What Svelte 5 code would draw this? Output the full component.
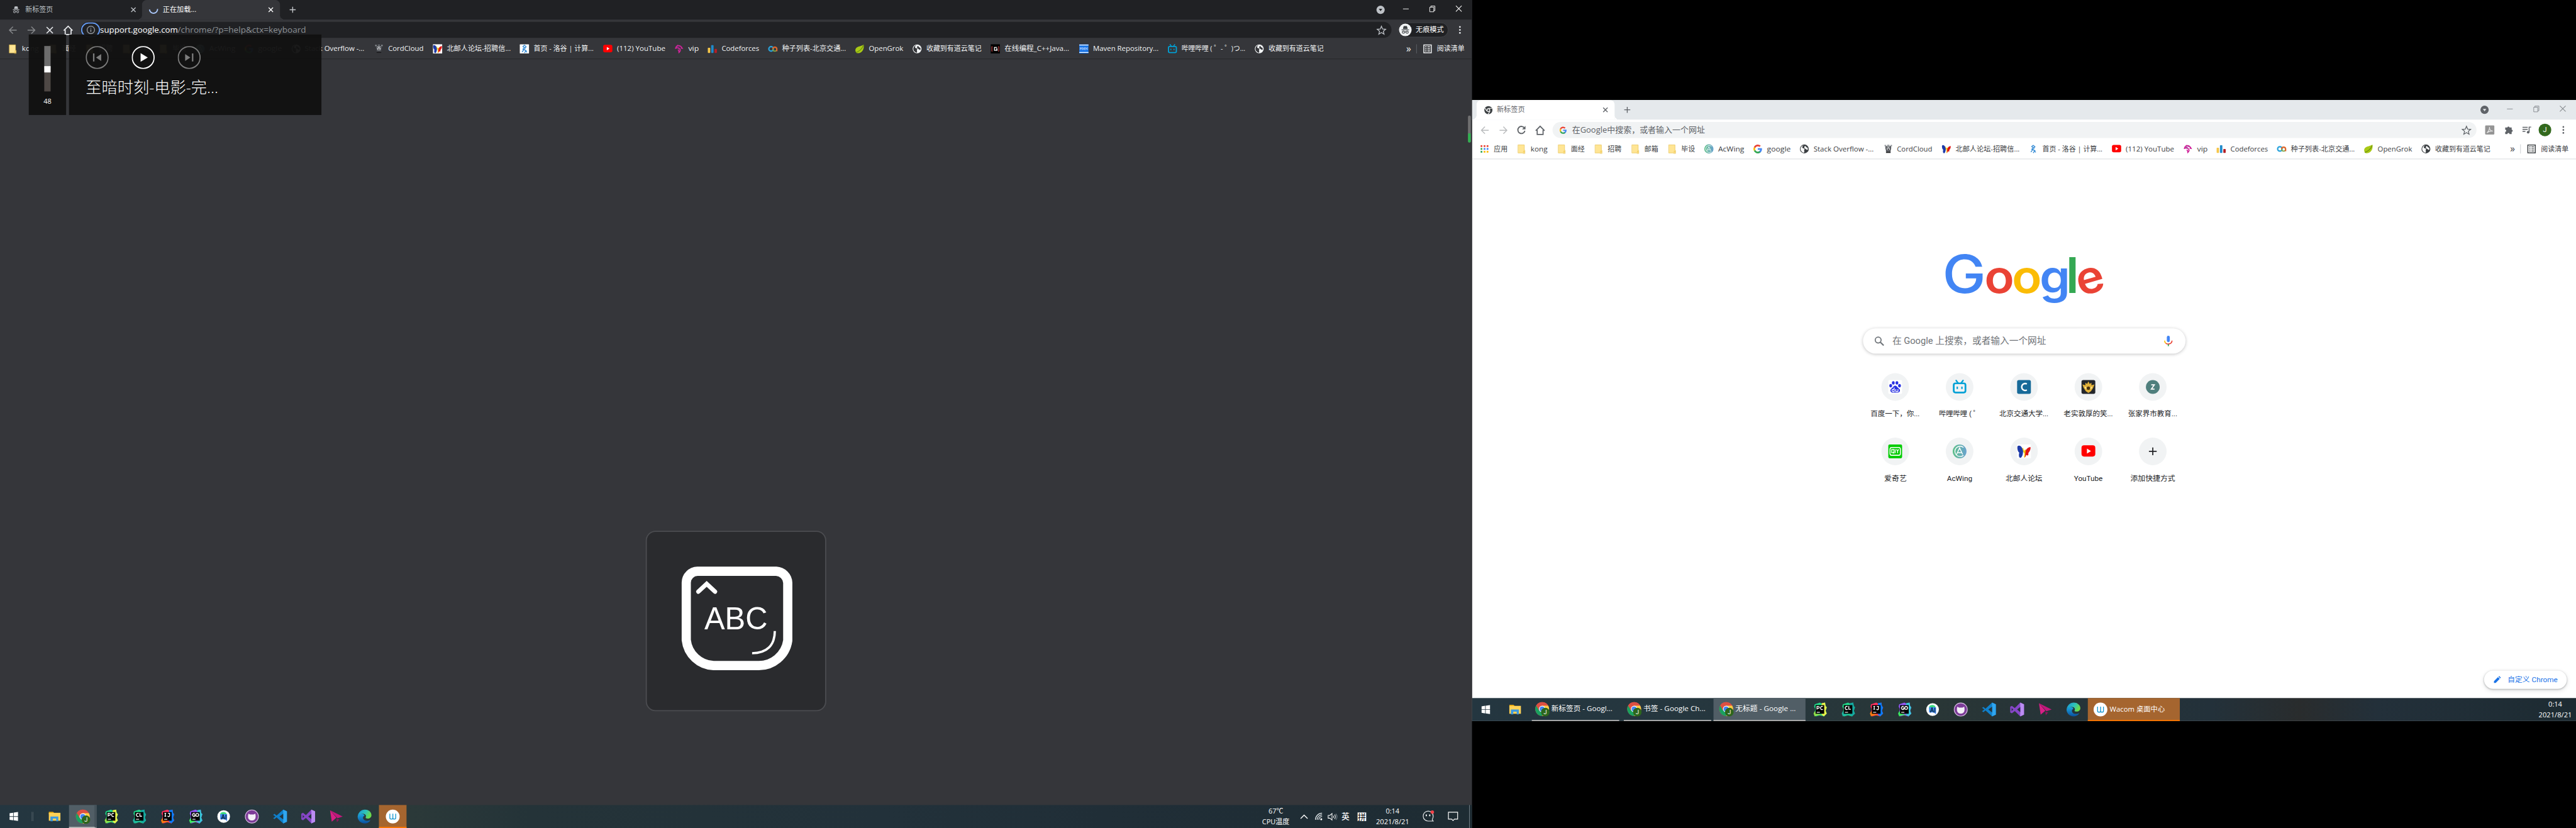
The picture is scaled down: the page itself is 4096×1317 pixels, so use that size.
<script>
  // Stretches a text run to a known advance width.
  function fit(node, w) {
    const s = node.firstElementChild;
    const apply = () => {
      s.style.transform = `scaleX(${w / s.offsetWidth})`;
    };
    apply();
    document.fonts.ready.then(apply);
  }

  const folder = '<rect x=".5" y="1" width="10.5" height="14" fill="#ffe594"/><path d="M0 1h11v9.500h1V16h-3v-1H0z" fill="none" stroke="#e8c14f" stroke-width=".8"/><path d="M9 11h3v4H9z" fill="#f6d36b"/>';
  const globe = '<circle cx="8" cy="8" r="7.700" fill="currentColor"/><path d="M7 1.500c-2 1-3.500 3-2 5l3 1c1 1-.5 1.500-.5 2.500s1 3 0 4.500c-3.500-.5-6-3.500-6-6.500S4 2 7 1.500zM9 3c2 0 1.500 2 3 2.500s2 1 2 3-2 1-3 0-3-1-3-2.500S8 4 9 3z" fill="var(--bg)"/>';
  const butterfly = '<rect width="16" height="16" fill="#fff"/><path d="M.5 2C3 0 6 3 7 7c0 4-1 8-3 8.500C1.500 15.500 2 11 2.500 9.500.5 8 0 4 .5 2z" fill="#1d3aa8"/><path d="M15.500 3C13 3 9.500 6 8.500 10v5c1 0 1.500-1 2-3 2 2 3 0 2.500-2C15 8 16 5 15.500 3z" fill="#e01515"/><path d="M6.500 4l1.500 5 1.500-3-1 9" fill="none" stroke="#f4c900" stroke-width="1"/>';
  const bili = '<path d="M4 .5l2.300 3M12 .5l-2.300 3" stroke="#00a1d6" stroke-width="1.700" stroke-linecap="round"/><rect x="1.200" y="3.800" width="13.600" height="10.600" rx="2" fill="none" stroke="#00a1d6" stroke-width="2"/><path d="M5.300 7.700v2.600M10.700 7.700v2.600" stroke="#00a1d6" stroke-width="1.600"/>';
  const google = '<path d="M8 6.700v2.900h4.200c-.4 1.900-2 3.100-4.200 3.100v3c4.300-.1 7.300-3 7.300-7.500 0-.5 0-1-.1-1.500z" fill="#4285f4"/><path d="M1.200 11.400C2.500 14 5 15.700 8 15.700c1.900 0 3.600-.7 4.900-1.800l-2.400-1.900c-.7.5-1.500.7-2.500.7-2 0-3.700-1.200-4.300-3.100z" fill="#34a853"/><path d="M3.700 9.600a4.800 4.800 0 0 1 0-3.100L1.200 4.500a7.800 7.800 0 0 0 0 7z" fill="#fbbc05"/><path d="M8 3.400c1.200 0 2.200.4 3 1.200L13.200 2.400A7.700 7.700 0 0 0 1.200 4.500l2.500 2C4.300 4.600 6 3.400 8 3.400z" fill="#ea4335"/>';
  const youtube = '<rect y="1" width="16" height="13" rx="3" fill="#f00"/><path d="M6.300 4.700v5.800L11 7.600z" fill="#fff"/>';
  const acwing = '<defs><linearGradient id="acg"><stop stop-color="#5fc08a"/><stop offset="1" stop-color="#6aa2cf"/></linearGradient></defs><circle cx="8" cy="8" r="8" fill="url(#acg)"/><path d="M12.500 3.500a6 6 0 1 0 0 9M4.500 11.500L8 4l3.500 7.500M6 9.500h4" fill="none" stroke="#fff" stroke-width="1"/>';

  const icons = {
    folder, globe, butterfly, bili, google, youtube, acwing,
    apps: '<path d="M1 1.500h3v3H1zM6.300 1.500h3v3h-3zM11.500 1.500h3v3h-3z" fill="#ea4335"/><path d="M1 6.500h3v3H1z" fill="#34a853"/><path d="M6.300 6.500h3v3h-3zM11.500 6.500h3v3h-3z" fill="#4285f4"/><path d="M1 11.500h3v3H1z" fill="#34a853"/><path d="M6.300 11.500h3v3h-3zM11.500 11.500h3v3h-3z" fill="#fbbc05"/>',
    cord: '<path d="M3 3h10v4l-1 4v2H4v-2L3 7z" fill="#4a4d52"/><path d="M5 4h6v3.500l-1 3H6l-1-3z" fill="#c9ccd0"/><path d="M5.500 5h1.500v1.500H5.500zM9 5h1.500v1.500H9zM7 7.500h2V10H7z" fill="#1c1d1f"/><path d="M4 13h8v2H4z" fill="#1c1d1f"/><path d="M1.500 1H4v2.500H1.500zM12 1h2.500v2.500H12zM6 .8h4v1.500H6z" fill="#8f9499"/>',
    luogu: '<rect width="16" height="16" rx="1" fill="var(--tile)"/><path d="M8 1.500l3 3-3 2-2.500 2L11 11l-3 4M8 1.500L5.500 4 10 7.500M8 8l-4 5.500M9 10l3.500 4" fill="none" stroke="#3b8fd6" stroke-width="1.600"/>',
    vip: '<path d="M2 8c0-3 2-5 4.500-6.500M6 2.500c3-.5 6 1.500 7.500 4.500l-2.500-.5M3 6.500c2-.5 4.500 0 6 1.500s1.500 4-1 6c0-2-.5-3.500-2-4.500" fill="none" stroke="#d0259a" stroke-width="2"/><path d="M6 2.500L5 7l5-4" stroke="#8d2a8d" stroke-width=".9" fill="none"/>',
    cf: '<rect x="0" y="6" width="4.200" height="9" rx="1" fill="#f5c64a"/><rect x="5.800" y="1.500" width="4.200" height="13.500" rx="1" fill="#1f8acb"/><rect x="11.600" y="8" width="4.200" height="7" rx="1" fill="#b51f26"/>',
    seed: '<circle cx="5" cy="8" r="3.900" fill="none" stroke="#2aa3dc" stroke-width="2.400"/><circle cx="11.500" cy="8.500" r="3.400" fill="none" stroke="#7fa54b" stroke-width="2"/><path d="M8 8a3.600 3.600 0 0 1 7-.5V12" fill="none" stroke="#e9632b" stroke-width="2.200"/>',
    leaf: '<path d="M15 .5C10 4 2 3 .7 9c-.5 3 1 6 3.500 6.500C12 15.500 16.500 9 15 .5z" fill="#a9c916"/><path d="M1.500 14C6 13 12 9 14.500 2" fill="none" stroke="#668b10" stroke-width="1.200"/>',
    cg: '<rect width="16" height="16" fill="#000"/><path d="M3 4H2v8h1M13 4h1v8h-1" stroke="#f55" stroke-width="1" fill="none"/><path d="M11 5.500H6.500v5H11V8H9" fill="none" stroke="#fff" stroke-width="1.400"/>',
    mvn: '<rect width="16" height="16" fill="#1673e6"/><path d="M0 1.200h16M0 14.200h16" stroke="#fff" stroke-width="1.400"/><path d="M1.500 10V5.500l1.500 2 1.500-2V10M6.500 5v5M9 5v5M6.500 8H9M11 10V5.500l3 4V5" fill="none" stroke="#bcd8ff" stroke-width="1"/>',
    list: '<rect x="1.200" y="1.200" width="13" height="13.600" fill="none" stroke="currentColor" stroke-width="1.600"/><path d="M3.500 4.500H6M7.500 4.500H12M3.500 8H6M7.500 8H12M3.500 11.500H6M7.500 11.500H12" stroke="currentColor" stroke-width="1.500"/>',
    incog: '<path d="M5 2l1-1 2 .5 2-.5 1 1 1.200 4.500H3.800z" fill="currentColor"/><path d="M1.500 8h13M7 11.800c.5-.5 1.500-.5 2 0" stroke="currentColor" stroke-width="1.200" fill="none"/><circle cx="4.800" cy="12" r="2" fill="none" stroke="currentColor" stroke-width="1.200"/><circle cx="11.200" cy="12" r="2" fill="none" stroke="currentColor" stroke-width="1.200"/>',
    spin: '<path d="M1 7.500A7 7 0 0 0 15 6.500" fill="none" stroke="#a9c7fa" stroke-width="2"/>',
    mono: '<circle cx="8" cy="8" r="7.500" fill="#3c4043"/><circle cx="8" cy="8" r="2.600" fill="#3c4043" stroke="#fff" stroke-width="1.300"/><path d="M8 4.500h6.800M4.800 9.500L1.500 4M11 10l-3.500 5.500" stroke="#fff" stroke-width="1.200"/>',
    x: '<path d="M4.200 4.200l7.600 7.600M11.800 4.200l-7.600 7.600" stroke="currentColor" stroke-width="1.500"/>',
    plus: '<path d="M8 2v12M2 8h12" stroke="currentColor" stroke-width="1.700"/>',
    back: '<path d="M15 8H2M8 1.500L1.500 8 8 14.500" fill="none" stroke="currentColor" stroke-width="1.700"/>',
    fwd: '<path d="M1 8h13M8 1.500L14.500 8 8 14.500" fill="none" stroke="currentColor" stroke-width="1.700"/>',
    stop: '<path d="M2.200 2.200l11.600 11.600M13.800 2.200L2.200 13.800" stroke="currentColor" stroke-width="1.900"/>',
    reload: '<path d="M13.300 4.800A6.200 6.200 0 1 0 14 9.500" fill="none" stroke="currentColor" stroke-width="2"/><path d="M15 1v6H9z" fill="currentColor"/>',
    home: '<path d="M.8 8.700L8 1.500l7.200 7.200M3.200 7.500V15H12.800V7.500" fill="none" stroke="currentColor" stroke-width="1.800"/>',
    info: '<circle cx="8" cy="8" r="6.500" fill="none" stroke="currentColor" stroke-width="1.400"/><path d="M8 7v4.500M8 4.300v1.500" stroke="currentColor" stroke-width="1.500"/>',
    star: '<path d="M8 1.500l1.900 4.600 5 .4-3.800 3.200 1.200 4.800L8 11.900l-4.300 2.600 1.200-4.800L1.100 6.500l5-.4z" fill="none" stroke="currentColor" stroke-width="1.300"/>',
    dots: '<circle cx="8" cy="2.800" r="1.500" fill="currentColor"/><circle cx="8" cy="8" r="1.500" fill="currentColor"/><circle cx="8" cy="13.200" r="1.500" fill="currentColor"/>',
    drop: '<circle cx="8" cy="8" r="7.200" fill="currentColor"/><path d="M5 6.300h6L8 10.500z" fill="var(--strip)"/>',
    min: '<path d="M3 8.500h10" stroke="currentColor" stroke-width="1"/>',
    restore: '<path d="M3.500 5.500h7v8h-7zM5.500 5.500v-2h7v8h-2" fill="none" stroke="currentColor" stroke-width="1"/>',
    close: '<path d="M3 3l10 10M13 3L3 13" stroke="currentColor" stroke-width="1.100"/>',
    pdf: '<rect width="16" height="16" rx="1.500" fill="#959595"/><path d="M3 13c3-3 5-6 4.500-10 0 5 3 7 6 7-4-.5-8 1-10.500 3z" fill="none" stroke="#e8e8e8" stroke-width="1.200"/>',
    puzzle: '<path d="M6 3a2 2 0 0 1 4 0h4v4a2 2 0 0 1 0 4v4h-4a2 2 0 0 0-4 0H2v-4a2 2 0 0 0 0-4V3z" fill="currentColor"/>',
    music: '<path d="M1 3.500h9M1 7h9M1 10.500h5M12.500 12V3H16" stroke="currentColor" stroke-width="1.600" fill="none"/><circle cx="10.800" cy="12" r="2.300" fill="currentColor"/>',
    search: '<circle cx="6" cy="6" r="4.800" fill="none" stroke="#70757a" stroke-width="1.800"/><path d="M9.500 9.500L15 15" stroke="#70757a" stroke-width="2.200"/>',
    mic: '<rect x="5.700" y="0" width="4.600" height="9.800" rx="2.300" fill="#4285f4"/><path d="M2.300 7.500c0 2 .8 3.300 2 4.200" stroke="#fbbc05" stroke-width="1.600" fill="none"/><path d="M4.200 11.600c2.500 2 9.500 1.500 9.500-4.100" stroke="#ea4335" stroke-width="1.600" fill="none"/><path d="M8 13v3" stroke="#34a853" stroke-width="1.700"/>',
    pencil: '<path d="M1.500 14.500V11L9.500 3 13 6.500l-8 8zM10.500 2l1.500-1.200L15.200 4 14 5.500z" fill="#1a73e8"/>',
    baidu: '<rect width="16" height="16" rx="1.500" fill="#fff"/><g fill="#2932e1"><ellipse cx="2.800" cy="6.500" rx="1.600" ry="2"/><ellipse cx="5.800" cy="3.300" rx="1.600" ry="2"/><ellipse cx="10" cy="3.300" rx="1.600" ry="2"/><ellipse cx="13" cy="6.500" rx="1.600" ry="2"/><path d="M8 6.500c-2 0-2.500 2-4.500 3.500s-1 4.500 1.500 4.500h6c2.500 0 3.500-3 1.500-4.500S10 6.500 8 6.500z"/></g><path d="M6.800 8.800v4.500H5.500a1 1 0 0 1 0-2.500h1.300M8.700 10.500v2.800h2.500v-2.800" fill="none" stroke="#fff" stroke-width=".9"/>',
    csdn: '<rect width="16" height="16" rx="2" fill="#176a99"/><path d="M11.300 4.500a4 4 0 1 0 0 7" fill="none" stroke="#fff" stroke-width="1.700"/>',
    crown: '<rect width="16" height="16" rx="2" fill="#23262b"/><path d="M8 1.500l1.500 3 2-1.500v3L15 5l-1.500 4L11 13l-3 2-3-2-2.500-4L1 5l3.500 1V3l2 1.500z" fill="#e2b23a"/><circle cx="8" cy="9.500" r="2" fill="#4a3413"/><path d="M4 8l1.500 2M12 8l-1.500 2" stroke="#fff3b0" stroke-width="1"/>',
    zed: '<circle cx="8" cy="8" r="8" fill="#4f7f7d"/><path d="M6.200 5.500h3.600L6.300 10.500h3.700" fill="none" stroke="#fff" stroke-width="1.200"/>',
    iqiyi: '<rect width="16" height="16" rx="1.500" fill="#0c0"/><rect x="2" y="3.500" width="12" height="9" rx="2" fill="none" stroke="#fff" stroke-width="1.100"/><path d="M4 5.800h2.500v3.800H4zM5.500 9l1.200 1.500M8 5.500v4.500M9.500 5.500l1.300 2 1.300-2M10.800 7.500V10" fill="none" stroke="#fff" stroke-width="1"/>'
  };

  const jb = (a, b, c, body) =>
    `<path d="M3 3l9-3 4 2 5-2 1 6 2 2-2 6 2 5-5 5-7-2-7 2-2-7 1-6-2-4z" fill="${a}"/><path d="M15 1l6-1 1 6 2 2-2 6 2 5-5 5-4-3z" fill="${b}"/><path d="M3 15l5 4 8 3-8 0-5 2-2-5z" fill="${c}"/><rect x="4.500" y="4.300" width="15" height="15" fill="#000"/><path d="M6.500 16.800h5.500" stroke="#fff" stroke-width="1.300"/><g fill="none" stroke="#fff" stroke-width="1.500">${body}</g>`;
  const apps = {
    start: '<path d="M4 5.800l6.800-1v6.700H4zM11.800 4.700L20 3.500v8h-8.200zM4 12.500h6.800v6.700L4 18.200zM11.800 12.500H20v8l-8.200-1.200z" fill="#fff"/>',
    files: '<path d="M1 3h8l2 2v3H1z" fill="#e5a50a"/><path d="M1 5h22v15H1z" fill="#ffd257"/><path d="M4 21v-9h15v9h-4v-5H8.500v5z" fill="#3c9ae0"/>',
    chrome: '<circle cx="12" cy="12" r="12" fill="#dd4f43"/><path d="M1.600 6A12 12 0 0 0 12 24l5-9z" fill="#1aa15f"/><path d="M12 24A12 12 0 0 0 22.400 6H12l5 9z" fill="#ffce44"/><path d="M1.600 6l5 8.800L12 6h10.400A12 12 0 0 0 1.600 6z" fill="#dd4f43"/><circle cx="12" cy="12" r="5.600" fill="#fff"/><circle cx="12" cy="12" r="4.400" fill="#4285f4"/>',
    pc: jb('#21d789', '#e9f24a', '#8fe04a', '<path d="M7 12V6.500h2.300a1.500 1.500 0 0 1 0 3.300H7M17.200 7a2.700 2.700 0 1 0 0 4.500"/>'),
    cl: jb('#21d789', '#15a9a1', '#1fb7a0', '<path d="M11.200 7a2.700 2.700 0 1 0 0 4.500M13.300 6v5.500H17"/>'),
    ij: jb('#fe315d', '#087cfa', '#f97a12', '<path d="M7 6.500h3M7 11.500h3M8.500 6.500v5M13 6.500h3v3.800a1.600 1.600 0 0 1-3.300.6"/>'),
    go: jb('#9357f5', '#38c8d8', '#3bea62', '<path d="M11 7a2.700 2.700 0 1 0 0 4.500V9.300H9"/><circle cx="15" cy="9.200" r="2.500"/>'),
    as: '<circle cx="12" cy="12" r="11" fill="#fff"/><path d="M6 7a6 5 0 0 1 11 0v8H6z" fill="#3ddc84"/><path d="M6 8h12v12l-4-3H6z" fill="#4285f4"/><path d="M8 17l3-8 3 8M9 14.500h4M16 9v8" fill="none" stroke="#073042" stroke-width="1.500"/>',
    gh: '<circle cx="12" cy="12" r="11.400" fill="#7d3c98" stroke="#d7bde2" stroke-width="1.200"/><path d="M6 7l3 1.500h6L18 7c1 4 1 8-1 10s-3 2-5 2-3 0-5-2-2-6-1-10z" fill="#f4f0f7"/>',
    code: '<path d="M17.500 0L24 3v18l-6.500 3L6 13.500 2.500 16.500 0 15l4-3-4-3 2.500-1.500L6 10.500z" fill="#0f80cc"/><path d="M17.500 0L24 3v18l-6.500 3z" fill="#2fa6f0"/><path d="M17.500 7v10L11 12z" fill="#24343c"/>',
    vs: '<path d="M17.500 0L24 3v18l-6.500 3L8 14.500 3 18.500 0 17V7l3-1.500 5 4z" fill="#8646c8"/><path d="M17.500 0L24 3v18l-6.500 3z" fill="#bb8cf2"/><path d="M17.500 7.500v9L12 12zM2.500 9.500v5l2.800-2.500z" fill="#24343c"/>',
    plane: '<path d="M1 1l22 11-9 3z" fill="#c2187c"/><path d="M1 1l3 20 8-7z" fill="#d81f86"/><path d="M12 16l5 1-4 5z" fill="#8f145e"/>',
    edge: '<defs><linearGradient id="eg" x2="1" y2=".4"><stop stop-color="#1693d8"/><stop offset=".6" stop-color="#2fc3b8"/><stop offset="1" stop-color="#6bdc4a"/></linearGradient><linearGradient id="eb" x2="0" y2="1"><stop stop-color="#1ca7e0"/><stop offset="1" stop-color="#0a4f9e"/></linearGradient></defs><path d="M0 12C1 5 6 0 12.500 0 20 0 24 5 24 9.500c0 4-3 6-6.500 6-3 0-4-1-3.500-2 1.500-3-.5-6-4.500-6C5 7.500 1 9 0 12z" fill="url(#eg)"/><path d="M0 12c1-5 11-6.500 12-1-4 0-4.500 9.500 6 8.500 2 0 3.500-1.500 4-1C20 22 16.500 24 12.500 24 5 24 0 18.500 0 12z" fill="url(#eb)"/>',
    wacom: '<circle cx="12" cy="12" r="12" fill="#fff"/><path d="M7 7v7.500q0 2 2.500 2h.5q2.200 0 2.200-2V7M12.200 14.500q0 2 2.200 2h.5q2.300 0 2.300-2V7" fill="none" stroke="#1d9bd1" stroke-width="1.500"/>',
    caret: '<path d="M6 15.500L12 9.500l6 6" fill="none" stroke="#fff" stroke-width="1.500"/>',
    wifi: '<g fill="none" stroke="#dfe5e8" stroke-width="1.400"><path d="M6 17.500A12 12 0 0 1 18 5.500"/><path d="M9 17.500a9 9 0 0 1 9-9"/><path d="M12 17.500a6 6 0 0 1 6-6"/></g><circle cx="16.500" cy="16.500" r="1.800" fill="#fff"/>',
    sound: '<path d="M4 9.500h3L11 6v12l-4-3.500H4z" fill="none" stroke="#fff" stroke-width="1.200"/><path d="M13.500 10a4 4 0 0 1 0 4M15.700 8a7 7 0 0 1 0 8" fill="none" stroke="#fff" stroke-width="1.200"/><path d="M18 6.500a9 9 0 0 1 0 11" fill="none" stroke="#77858c" stroke-width="1.200"/>',
    ghost: '<path d="M20.500 20H12a8.700 8.700 0 1 1 8.500-8.500c0 4-2 5-1.500 6.500z" fill="none" stroke="#e3e6e8" stroke-width="1.300"/><path d="M8.500 8.500v3M14.500 8.500v3" stroke="#fff" stroke-width="2"/><circle cx="19" cy="4.500" r="3" fill="#f4434a"/>',
    note: '<path d="M4 4.500h16v12h-5.500L12 19l-2.500-2.500H4z" fill="none" stroke="#fff" stroke-width="1.300"/>'
  };

  // Each bookmark: icon, icon x, text x, label, label width.
  const darkMarks = [
    ['folder', 16, 38, 'kong', 29], ['folder', 86, 108, '面经', 24], ['folder', 150, 172, '招聘', 24],
    ['folder', 214, 237, '邮箱', 24], ['folder', 278, 300, '毕设', 24], ['acwing', 340, 364, 'AcWing', 45],
    ['google', 425, 449, 'google', 41], ['globe', 507, 530, 'Stack Overflow -...', 104],
    ['cord', 651, 675, 'CordCloud', 62], ['butterfly', 753, 777, '北邮人论坛-招聘信...', 111],
    ['luogu', 904, 928, '首页 - 洛谷 | 计算...', 104], ['youtube', 1049, 1073, '(112) YouTube', 84],
    ['vip', 1173, 1197, 'vip', 18], ['cf', 1231, 1255, 'Codeforces', 65],
    ['seed', 1336, 1360, '种子列表-北京交通...', 111], ['leaf', 1487, 1511, 'OpenGrok', 60],
    ['globe', 1587, 1611, '收藏到有道云笔记', 96], ['cg', 1723, 1747, '在线编程_C++Java...', 113],
    ['mvn', 1877, 1901, 'Maven Repository...', 114], ['bili', 2031, 2055, '哔哩哔哩 ( ゜- ゜)つ...', 111],
    ['globe', 2182, 2206, '收藏到有道云笔记', 96]
  ];
  const lightMarks = [
    ['apps', 14, 38, '应用', 24], ['folder', 80, 102, 'kong', 29], ['folder', 150, 172, '面经', 24],
    ['folder', 214, 236, '招聘', 24], ['folder', 278, 300, '邮箱', 24], ['folder', 342, 364, '毕设', 24],
    ['acwing', 404, 428, 'AcWing', 45], ['google', 489, 513, 'google', 41],
    ['globe', 570, 594, 'Stack Overflow -...', 105], ['cord', 716, 739, 'CordCloud', 62],
    ['butterfly', 817, 841, '北邮人论坛-招聘信...', 111], ['luogu', 968, 992, '首页 - 洛谷 | 计算...', 104],
    ['youtube', 1113, 1137, '(112) YouTube', 84], ['vip', 1237, 1261, 'vip', 18],
    ['cf', 1295, 1319, 'Codeforces', 65], ['seed', 1400, 1424, '种子列表-北京交通...', 111],
    ['leaf', 1551, 1575, 'OpenGrok', 60], ['globe', 1651, 1675, '收藏到有道云笔记', 96]
  ];
  // Letter, colour, glyph advance, distance to the next letter.
  const logo = [
    ['G', '#4285f4', 76, 73], ['o', '#ea4335', 52, 48], ['o', '#fbbc05', 52, 48],
    ['g', '#4285f4', 53, 46], ['l', '#34a853', 23, 16], ['e', '#ea4335', 49, 49]
  ];
  const tiles = [
    ['baidu', '百度一下，你...', 86], ['bili', '哔哩哔哩 ( ゜', 72], ['csdn', '北京交通大学...', 86],
    ['crown', '老实敦厚的笑...', 86], ['zed', '张家界市教育...', 86], ['iqiyi', '爱奇艺', 39],
    ['acwing', 'AcWing', 44], ['butterfly', '北邮人论坛', 64], ['youtube', 'YouTube', 50], ['plus', '添加快捷方式', 78]
  ];
  const pinned = ['pc', 'cl', 'ij', 'go', 'as', 'gh', 'code', 'vs', 'plane', 'edge'];
  const windows = [
    ['新标签页 - Googl...', 106, ''], ['书签 - Google Ch...', 108, ''], ['无标题 - Google ...', 105, 'on']
  ];
</script>

{#snippet ic(name, size)}
  <svg class="ic" width={size} height={size} viewBox="0 0 16 16">{@html icons[name]}</svg>
{/snippet}

{#snippet app(name, size)}
  <svg class="ic" width={size} height={size} viewBox="0 0 24 24">{@html apps[name]}</svg>
{/snippet}

{#snippet txt(s, w)}
  <span class="fit" style="width:{w}px" use:fit={w}><span>{s}</span></span>
{/snippet}

{#snippet controls()}
  <div class="controls">
    <span class="drop">{@render ic('drop', 16)}</span>
    <span>{@render ic('min', 16)}</span>
    <span>{@render ic('restore', 16)}</span>
    <span>{@render ic('close', 16)}</span>
  </div>
{/snippet}

{#snippet marks(list)}
  <div class="marks">
    {#each list as [icon, x, tx, label, w], i}
      <span class="mark" style="width:{(list[i + 1]?.[1] ?? tx + w) - x}px">
        {@render ic(icon, 16)}
        <span class="pad" style="width:{tx - x - 16}px"></span>
        {@render txt(label, w)}
      </span>
    {/each}
    <div class="reading">
      <span class="more">»</span>
      <i></i>
      {@render ic('list', 16)}
      {@render txt('阅读清单', 48)}
    </div>
  </div>
{/snippet}

{#snippet chromeIcon()}
  <span class="chrome">{@render app('chrome', 24)}<b>J</b></span>
{/snippet}

<div class="desk">
  <section class="left dark">
    <div class="strip">
      <div class="tab idle">
        {@render ic('incog', 14)}
        {@render txt('新标签页', 48)}
        <span class="x">{@render ic('x', 16)}</span>
      </div>
      <div class="tab live">
        {@render ic('spin', 16)}
        {@render txt('正在加载...', 58)}
        <span class="x">{@render ic('x', 16)}</span>
      </div>
      <span class="new">{@render ic('plus', 14)}</span>
      {@render controls()}
    </div>
    <div class="bar">
      <span class="nav off">{@render ic('back', 15)}</span>
      <span class="nav off">{@render ic('fwd', 15)}</span>
      <span class="nav">{@render ic('stop', 15)}</span>
      <span class="nav">{@render ic('home', 17)}</span>
      <div class="omni">
        <span class="ring">{@render ic('info', 16)}</span>
        <span class="host">{@render txt('support.google.com', 135)}</span>
        <span class="path">{@render txt('/chrome/?p=help&ctx=keyboard', 223)}</span>
        <span class="star">{@render ic('star', 17)}</span>
      </div>
      <div class="chip">
        <span class="spy">{@render ic('incog', 16)}</span>
        {@render txt('无痕模式', 49)}
      </div>
      <span class="kebab">{@render ic('dots', 16)}</span>
    </div>
    {@render marks(darkMarks)}
    <main class="void"></main>

    <div class="task">
      <span class="btn start">{@render app('start', 22)}</span>
      <span class="grip"></span>
      <span class="btn files">{@render app('files', 22)}</span>
      <span class="btn on chromebtn">{@render chromeIcon()}</span>
      {#each pinned as p}<span class="btn">{@render app(p, 24)}</span>{/each}
      <span class="btn wac">{@render app('wacom', 24)}</span>
      <div class="tray">
        <span class="two cpu">{@render txt('67℃', 26)}{@render txt('CPU温度', 48)}</span>
        <span class="t24">{@render app('caret', 24)}</span>
        <span class="t24">{@render app('wifi', 23)}</span>
        <span class="t24">{@render app('sound', 23)}</span>
        <span class="ying">英</span>
        <span class="pin">拼</span>
        <span class="two clock">{@render txt('0:14', 24)}{@render txt('2021/8/21', 58)}</span>
        <span class="ghost">{@render app('ghost', 24)}</span>
        <span class="note">{@render app('note', 24)}</span>
      </div>
    </div>

    <div class="osd">
      <div class="vol"><div class="track"><i></i></div><span>48</span></div>
      <div class="media">
        <div class="keys">
          <svg width="40" height="40" viewBox="0 0 40 40" color="#7c7c7c"><circle cx="20" cy="20" r="19" fill="none" stroke="currentColor" stroke-width="2" /><path d="M14 13v14" stroke="currentColor" stroke-width="2.500" /><path d="M27 14v12l-9-6z" fill="currentColor" /></svg>
          <svg width="40" height="40" viewBox="0 0 40 40" color="#fff"><circle cx="20" cy="20" r="19" fill="none" stroke="currentColor" stroke-width="2" /><path d="M15.500 12.500v15L28 20z" fill="currentColor" /></svg>
          <svg width="40" height="40" viewBox="0 0 40 40" color="#7c7c7c"><circle cx="20" cy="20" r="19" fill="none" stroke="currentColor" stroke-width="2" /><path d="M26 13v14" stroke="currentColor" stroke-width="2.500" /><path d="M13 14v12l9-6z" fill="currentColor" /></svg>
        </div>
        <div class="title">{@render txt('至暗时刻-电影-完...', 231)}</div>
      </div>
    </div>

    <div class="caps">
      <svg width="314" height="314" viewBox="0 0 314 314">
        <path d="M90 70.500H227a21 21 0 0 1 20 20V191a51 51 0 0 1-52 43.500H118A50 50 0 0 1 70.500 190V90A20 20 0 0 1 90 70.500Z" fill="none" stroke="#fff" stroke-width="16" stroke-linejoin="round" />
        <path d="M91.500 106L106 92.500 120.500 106" fill="none" stroke="#fff" stroke-width="7.500" stroke-linecap="round" />
        <path d="M224.500 174.500c0 25-14 38.500-39.500 38.500" fill="none" stroke="#fff" stroke-width="4" />
        <text x="102" y="172" textLength="110" lengthAdjust="spacingAndGlyphs">ABC</text>
      </svg>
    </div>
    <div class="level"><i></i></div>
  </section>

  <section class="right">
    <div class="win light">
      <div class="strip">
        <div class="tab live">
          {@render ic('mono', 15)}
          {@render txt('新标签页', 49)}
          <span class="x">{@render ic('x', 16)}</span>
        </div>
        <span class="new">{@render ic('plus', 14)}</span>
        {@render controls()}
      </div>
      <div class="bar">
        <span class="nav off">{@render ic('back', 15)}</span>
        <span class="nav off">{@render ic('fwd', 15)}</span>
        <span class="nav">{@render ic('reload', 16)}</span>
        <span class="nav">{@render ic('home', 17)}</span>
        <div class="omni">
          <span class="gico">{@render ic('google', 13)}</span>
          {@render txt('在Google中搜索，或者输入一个网址', 231)}
          <span class="star">{@render ic('star', 17)}</span>
        </div>
        <span class="ext first">{@render ic('pdf', 16)}</span>
        <span class="ext">{@render ic('puzzle', 15)}</span>
        <span class="ext">{@render ic('music', 16)}</span>
        <span class="ext"><b class="ava">J</b></span>
        <span class="ext">{@render ic('dots', 16)}</span>
      </div>
      {@render marks(lightMarks)}
      <main class="ntp">
        <div class="logo">
          {#each logo as [c, color, w, step], i}
            <span class="l{i}" style="color:{color};width:{step}px" use:fit={w}><span>{c}</span></span>
          {/each}
        </div>
        <div class="search">
          {@render ic('search', 17)}
          {@render txt('在 Google 上搜索，或者输入一个网址', 267)}
          <span class="mic">{@render ic('mic', 18)}</span>
        </div>
        <div class="tiles">
          {#each tiles as [icon, label, w]}
            <div class="tile">
              <span class="disc">{@render ic(icon, icon === 'plus' ? 18 : 24)}</span>
              {@render txt(label, w)}
            </div>
          {/each}
        </div>
        <div class="custom">{@render ic('pencil', 14)}{@render txt('自定义 Chrome', 87)}</div>
      </main>
      <div class="task">
        <span class="btn start">{@render app('start', 22)}</span>
        <span class="btn files">{@render app('files', 22)}</span>
        {#each windows as [label, w, state]}
          <span class="wide {state}">{@render chromeIcon()}{@render txt(label, w)}</span>
        {/each}
        {#each pinned as p}<span class="btn">{@render app(p, 24)}</span>{/each}
        <span class="wide wac">{@render app('wacom', 24)}{@render txt('Wacom 桌面中心', 96)}</span>
        <div class="tray">
          <span class="two clock">{@render txt('0:14', 24)}{@render txt('2021/8/21', 58)}</span>
        </div>
      </div>
    </div>
  </section>
</div>

<style>
  :global(body) { margin: 0; overflow: hidden; background: #000; }
  :global(#app) { width: 4096px; height: 1317px; overflow: hidden; }
  .desk {
    width: 4480px; height: 1440px; display: flex; background: #000;
    transform: scale(0.9142857, 0.9145833); transform-origin: 0 0;
    font: 12px/16px "Open Sans", "Noto Sans CJK SC", sans-serif;
  }
  .ic { display: block; flex: none; overflow: visible; }
  .fit { display: block; flex: none; white-space: nowrap; }
  .fit > span, .logo span > span { display: inline-block; transform-origin: 0 50%; }

  .left { position: relative; width: 2560px; height: 1440px; display: flex; flex-direction: column; flex: none; }
  .right { width: 1920px; padding-top: 174px; flex: none; }
  .win { height: 1080px; display: flex; flex-direction: column; }
  .dark { --strip: #202124; --bg: #35363a; --tile: #fff; color: #e8eaed; background: #35363a; }
  .light { --strip: #e5e9ec; --bg: #fff; --tile: #fff; color: #3c4043; background: #fff; }

  .strip { display: flex; height: 34px; background: var(--strip); flex: none; }
  .tab { box-sizing: border-box; width: 240px; height: 34px; display: flex; align-items: center; }
  .idle { width: 247px; padding-left: 21px; gap: 9px; color: #bdc1c6; }
  .idle .x { margin-right: 7px; }
  .live { position: relative; background: var(--bg); border-radius: 8px 8px 0 0; padding-left: 12px; gap: 8px; }
  .live::before, .live::after { content: ''; position: absolute; bottom: 0; width: 8px; height: 8px; }
  .live::before { left: -8px; background: radial-gradient(circle at 0 0, transparent 8px, var(--bg) 8px); }
  .live::after { right: -8px; background: radial-gradient(circle at 100% 0, transparent 8px, var(--bg) 8px); }
  .dark .live { color: #fff; }
  .light .live { margin-left: 8px; gap: 7px; padding-left: 13px; color: #5f6368; }
  .x { margin-left: auto; margin-right: 8px; }
  .new { padding: 10px 15px; color: #c4c7ca; }
  .light .new { color: #5f6368; }
  .controls { margin-left: auto; display: flex; height: 29px; align-items: center; color: #fff; }
  .controls span { width: 46px; display: flex; justify-content: center; }
  .controls .drop { width: 42px; padding-top: 5px; color: #bdc1c6; }
  .light .controls { color: #83888c; }
  .light .controls .drop { color: #5f6368; }

  .bar { display: flex; align-items: center; height: 36px; padding-left: 6px; flex: none; }
  .nav { width: 32px; display: flex; justify-content: center; }
  .off { color: #87898c; }
  .light .nav { color: #5f6368; }
  .light .off { color: #babcbe; }
  .omni { box-sizing: border-box; height: 28px; margin-left: 6px; border-radius: 14px; display: flex; align-items: center; font-size: 14px; }
  .dark .omni { width: 2280px; background: #202124; }
  .light .omni { width: 1607px; background: #f1f3f4; color: #5f6368; }
  .ring { box-sizing: border-box; width: 33px; height: 26px; margin-left: 1px; border: 2px solid #669df6; border-radius: 14px; display: flex; align-items: center; justify-content: center; color: #9aa0a6; }
  .host { color: #fff; }
  .path { color: #8d9195; }
  .star { margin-left: auto; margin-right: 9px; color: #bdc1c6; }
  .light .star { color: #5f6368; }
  .gico { width: 34px; padding-left: 12px; box-sizing: border-box; }
  .chip { box-sizing: border-box; height: 26px; width: 88px; margin-left: 11px; border-radius: 13px; border: 1px solid #44464a; background: #202124; display: flex; align-items: center; gap: 7px; padding-left: 1px; color: #fff; }
  .spy { width: 22px; height: 22px; border-radius: 11px; background: #f1f3f4; color: #3c4043; display: flex; align-items: center; justify-content: center; }
  .kebab { margin-left: 12px; }
  .ext { width: 32px; display: flex; justify-content: center; color: #5f6368; }
  .ext.first { margin-left: 7px; }
  .ava { width: 22px; height: 22px; border-radius: 11px; background: #33691e; color: #fff; font: 12px/22px Roboto, sans-serif; text-align: center; }

  .marks { box-sizing: border-box; display: flex; align-items: center; height: 33px; padding-bottom: 2px; border-bottom: 1px solid #27282b; flex: none; padding-left: 16px; }
  .light .marks { padding-left: 14px; border-color: #d5d8db; }
  .mark { display: flex; align-items: center; flex: none; }
  .pad { flex: none; }
  .dark .marks { color: #f1f3f4; }
  .reading { margin-left: auto; display: flex; align-items: center; padding-right: 13px; }
  .reading i { width: 1px; height: 16px; background: #5f6368; margin: 0 11px 0 9px; }
  .light .reading i { background: #c9ccd0; }
  .reading .ic { margin-right: 8px; }
  .more { font-size: 17px; }

  .void, .ntp { flex: 1; min-height: 0; }

  .task {
    display: flex; height: 40px; flex: none; color: #fff;
    background: linear-gradient(90deg, #243640 0, #26373f 16%, #2b3939 28%, #243338 36%, #22313a 60%, #202e37 75%, #1e2c33 100%);
  }
  .light .task { background: linear-gradient(90deg, #243640 0, #26373e 25%, #293636 42%, #23313a 67%, #292c2d 75%, #23303a 82%, #1d2b32 100%); }
  .btn { width: 49px; height: 40px; display: flex; align-items: center; justify-content: center; flex: none; }
  .start { width: 48px; }
  .grip { box-sizing: border-box; width: 3px; height: 16px; margin: 12px 15px 0 7px; border: solid #4d5b63; border-width: 0 1px; }
  .files { width: 44px; }
  .dark .chromebtn { box-sizing: border-box; width: 48px; margin-left: 3px; border-bottom: 2px solid #b9b9b9; border-right: 4px solid #45525a; padding: 2px 0 0 4px; }
  .on { background: #515e66; }
  .light .files { width: 54px; margin-right: 2px; }
  .chrome { position: relative; display: block; }
  .chrome b { position: absolute; left: 10px; top: 10px; width: 15px; height: 15px; border-radius: 8px; background: #2d661c; color: #fff; font: 10px/15px Roboto, sans-serif; text-align: center; }
  .wide { box-sizing: border-box; height: 40px; width: 152px; padding-left: 6px; display: flex; align-items: center; gap: 4px; border-bottom: 2px solid #b0b0b0; margin-right: 8px; flex: none; }
  .wide .fit { font-size: 12px; }
  .wide.on { width: 160px; margin: 0 0 0 -4px; padding-left: 10px; }
  .wac { background: #a5652f; border-bottom: 2px solid #f97500; box-sizing: border-box; padding-top: 2px; }
  .btn.wac { width: 48px; margin-left: 1px; }
  .wide.wac { width: 160px; padding-left: 10px; margin-left: 1px; }
  .tray { margin-left: auto; display: flex; align-items: center; }
  .two { display: flex; flex-direction: column; align-items: center; gap: 2px; }
  .cpu { width: 50px; margin-right: 12px; }
  .t24 { width: 24px; display: flex; justify-content: center; }
  .dark .t24:nth-child(2) { margin-right: 1px; }
  .ying { width: 22px; text-align: center; font-size: 14px; font-weight: 500; }
  .pin { width: 15px; height: 15px; margin-left: 10px; background: #fff; color: #000; font-size: 14px; line-height: 15px; text-align: center; }
  .clock { width: 60px; margin: 0 16px; }
  .dark .clock { margin: 0 20px 0 16px; }
  .light .clock { width: 58px; margin: 0 7px 0 0; gap: 3px; }
  .ghost { width: 24px; }
  .note { width: 24px; margin: 0 4px 0 19px; border-right: 1px solid #78858b; padding-right: 16px; height: 40px; display: flex; align-items: center; }

  .osd { position: absolute; left: 50px; top: 60px; display: flex; gap: 5px; }
  .vol, .media { height: 140px; background: rgba(17, 17, 17, .96); color: #fff; box-sizing: border-box; }
  .vol { width: 65px; display: flex; flex-direction: column; align-items: center; padding-top: 20px; gap: 9px; }
  .track { width: 11px; height: 79px; background: linear-gradient(#6d6d6d 50%, #4e4845 50%); }
  .track i { display: block; width: 11px; height: 11px; background: #fff; position: relative; top: 35px; }
  .media { width: 439px; padding: 20px 0 0 29px; }
  .keys { display: flex; gap: 40px; }
  .title { font: 300 27px/40px "Open Sans", "Noto Sans CJK SC", sans-serif; margin-top: 12px; }

  .caps { position: absolute; left: 1123px; top: 923px; width: 314px; height: 314px; box-sizing: border-box; border: 2px solid #4b4c50; border-radius: 17px; background: #2a2b2e; }
  .caps svg { display: block; margin: -2px; }
  .caps text { font: 55px "Liberation Sans", sans-serif; fill: #fff; }
  .level { position: absolute; left: 2553px; top: 201px; width: 5px; height: 47px; border-radius: 3px; background: #6f6f70; overflow: hidden; display: flex; align-items: flex-end; }
  .level i { width: 5px; height: 16px; background: #2fb24f; }

  .ntp { position: relative; display: flex; flex-direction: column; align-items: center; }
  .logo { display: flex; align-items: baseline; width: 284px; height: 130px; margin-top: 150px; font: 600 79px/100px Inter, sans-serif; }
  .logo span { flex: none; }
  .logo .l0 { font-size: 92px; font-weight: 500; }
  .logo .l4 { font-size: 86px; }
  .logo .l5 { transform: rotate(-16deg); }
  .search { box-sizing: border-box; width: 561px; height: 44px; margin-top: 14px; border-radius: 22px; box-shadow: 0 1px 6px rgba(32, 33, 36, .28); display: flex; align-items: center; padding: 0 21px 0 20px; gap: 14px; font: 16px/24px Roboto, "Noto Sans CJK SC", sans-serif; color: #6f7377; }
  .mic { margin-left: auto; }
  .tiles { width: 560px; margin-top: 34px; display: grid; grid-template-columns: repeat(5, 112px); grid-auto-rows: 112px; }
  .tile { display: flex; flex-direction: column; align-items: center; gap: 15px; font: 12px/16px Roboto, "Noto Sans CJK SC", sans-serif; color: #202124; }
  .disc { width: 48px; height: 48px; border-radius: 24px; background: #f1f3f4; display: flex; align-items: center; justify-content: center; }
  .custom { position: absolute; right: 16px; bottom: 16px; width: 144px; height: 32px; box-sizing: border-box; border-radius: 16px; display: flex; align-items: center; gap: 11px; padding-left: 16px; color: #1a73e8; box-shadow: 0 1px 3px rgba(60, 64, 67, .4), 0 3px 8px rgba(60, 64, 67, .15); font: 12px/16px Roboto, "Noto Sans CJK SC", sans-serif; }
</style>
